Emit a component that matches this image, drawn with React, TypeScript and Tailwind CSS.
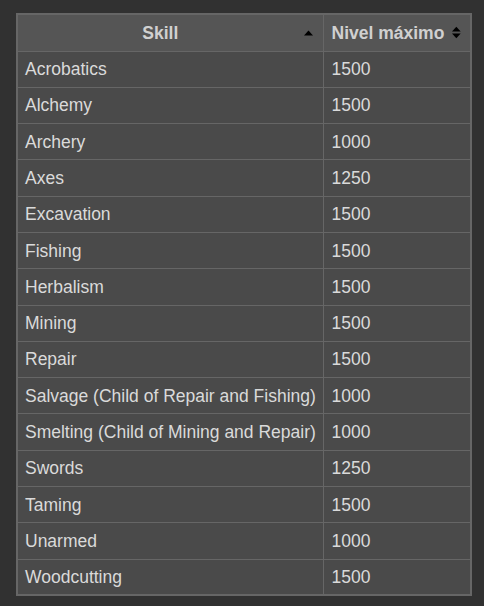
import React from "react";

const rows: [string, string][] = [
  ["Acrobatics", "1500"],
  ["Alchemy", "1500"],
  ["Archery", "1000"],
  ["Axes", "1250"],
  ["Excavation", "1500"],
  ["Fishing", "1500"],
  ["Herbalism", "1500"],
  ["Mining", "1500"],
  ["Repair", "1500"],
  ["Salvage (Child of Repair and Fishing)", "1000"],
  ["Smelting (Child of Mining and Repair)", "1000"],
  ["Swords", "1250"],
  ["Taming", "1500"],
  ["Unarmed", "1000"],
  ["Woodcutting", "1500"],
];

function SortUp() {
  return (
    <svg width="9" height="6" viewBox="0 0 9 6" className="block">
      <path d="M0 5.5 L4.5 0.5 L9 5.5 Z" fill="#000" />
    </svg>
  );
}

function SortBoth() {
  return (
    <svg width="9" height="13" viewBox="0 0 9 13" className="block">
      <path d="M0 5.5 L4.5 0.5 L9 5.5 Z" fill="#000" />
      <path d="M0 7.5 L4.5 12.5 L9 7.5 Z" fill="#000" />
    </svg>
  );
}

export default function App() {
  return (
    <div
      className="w-[484px] h-[606px] bg-[#313131] pt-[13px] pl-[16px]"
      style={{ fontFamily: '"Liberation Sans", Arial, sans-serif' }}
    >
      <table className="w-[454px] border-collapse border-2 border-[#666] text-[17.5px] text-[#dadada] table-fixed">
        <colgroup>
          <col className="w-[306px]" />
          <col className="w-[148px]" />
        </colgroup>
        <thead>
          <tr className="h-[37px] bg-[#555]">
            <th className="border border-[#666] p-0 font-bold text-[#d0d0d0]">
              <div className="flex items-center pl-[7px] pr-[10px]">
                <span className="flex-1 text-center pr-[8px]">Skill</span>
                <SortUp />
              </div>
            </th>
            <th className="border border-[#666] p-0 font-bold text-[#d0d0d0]">
              <div className="flex items-center pl-[8px] pr-[9px] gap-[8px]">
                <span className="flex-1 text-left whitespace-nowrap">Nivel máximo</span>
                <SortBoth />
              </div>
            </th>
          </tr>
        </thead>
        <tbody>
          {rows.map(([skill, lvl]) => (
            <tr key={skill} className="h-[36.3px] bg-[#4a4a4a]">
              <td className="border border-[#666] pl-[7px] pr-0 py-0 whitespace-nowrap">{skill}</td>
              <td className="border border-[#666] pl-[8px] pr-0 py-0">{lvl}</td>
            </tr>
          ))}
        </tbody>
      </table>
    </div>
  );
}
